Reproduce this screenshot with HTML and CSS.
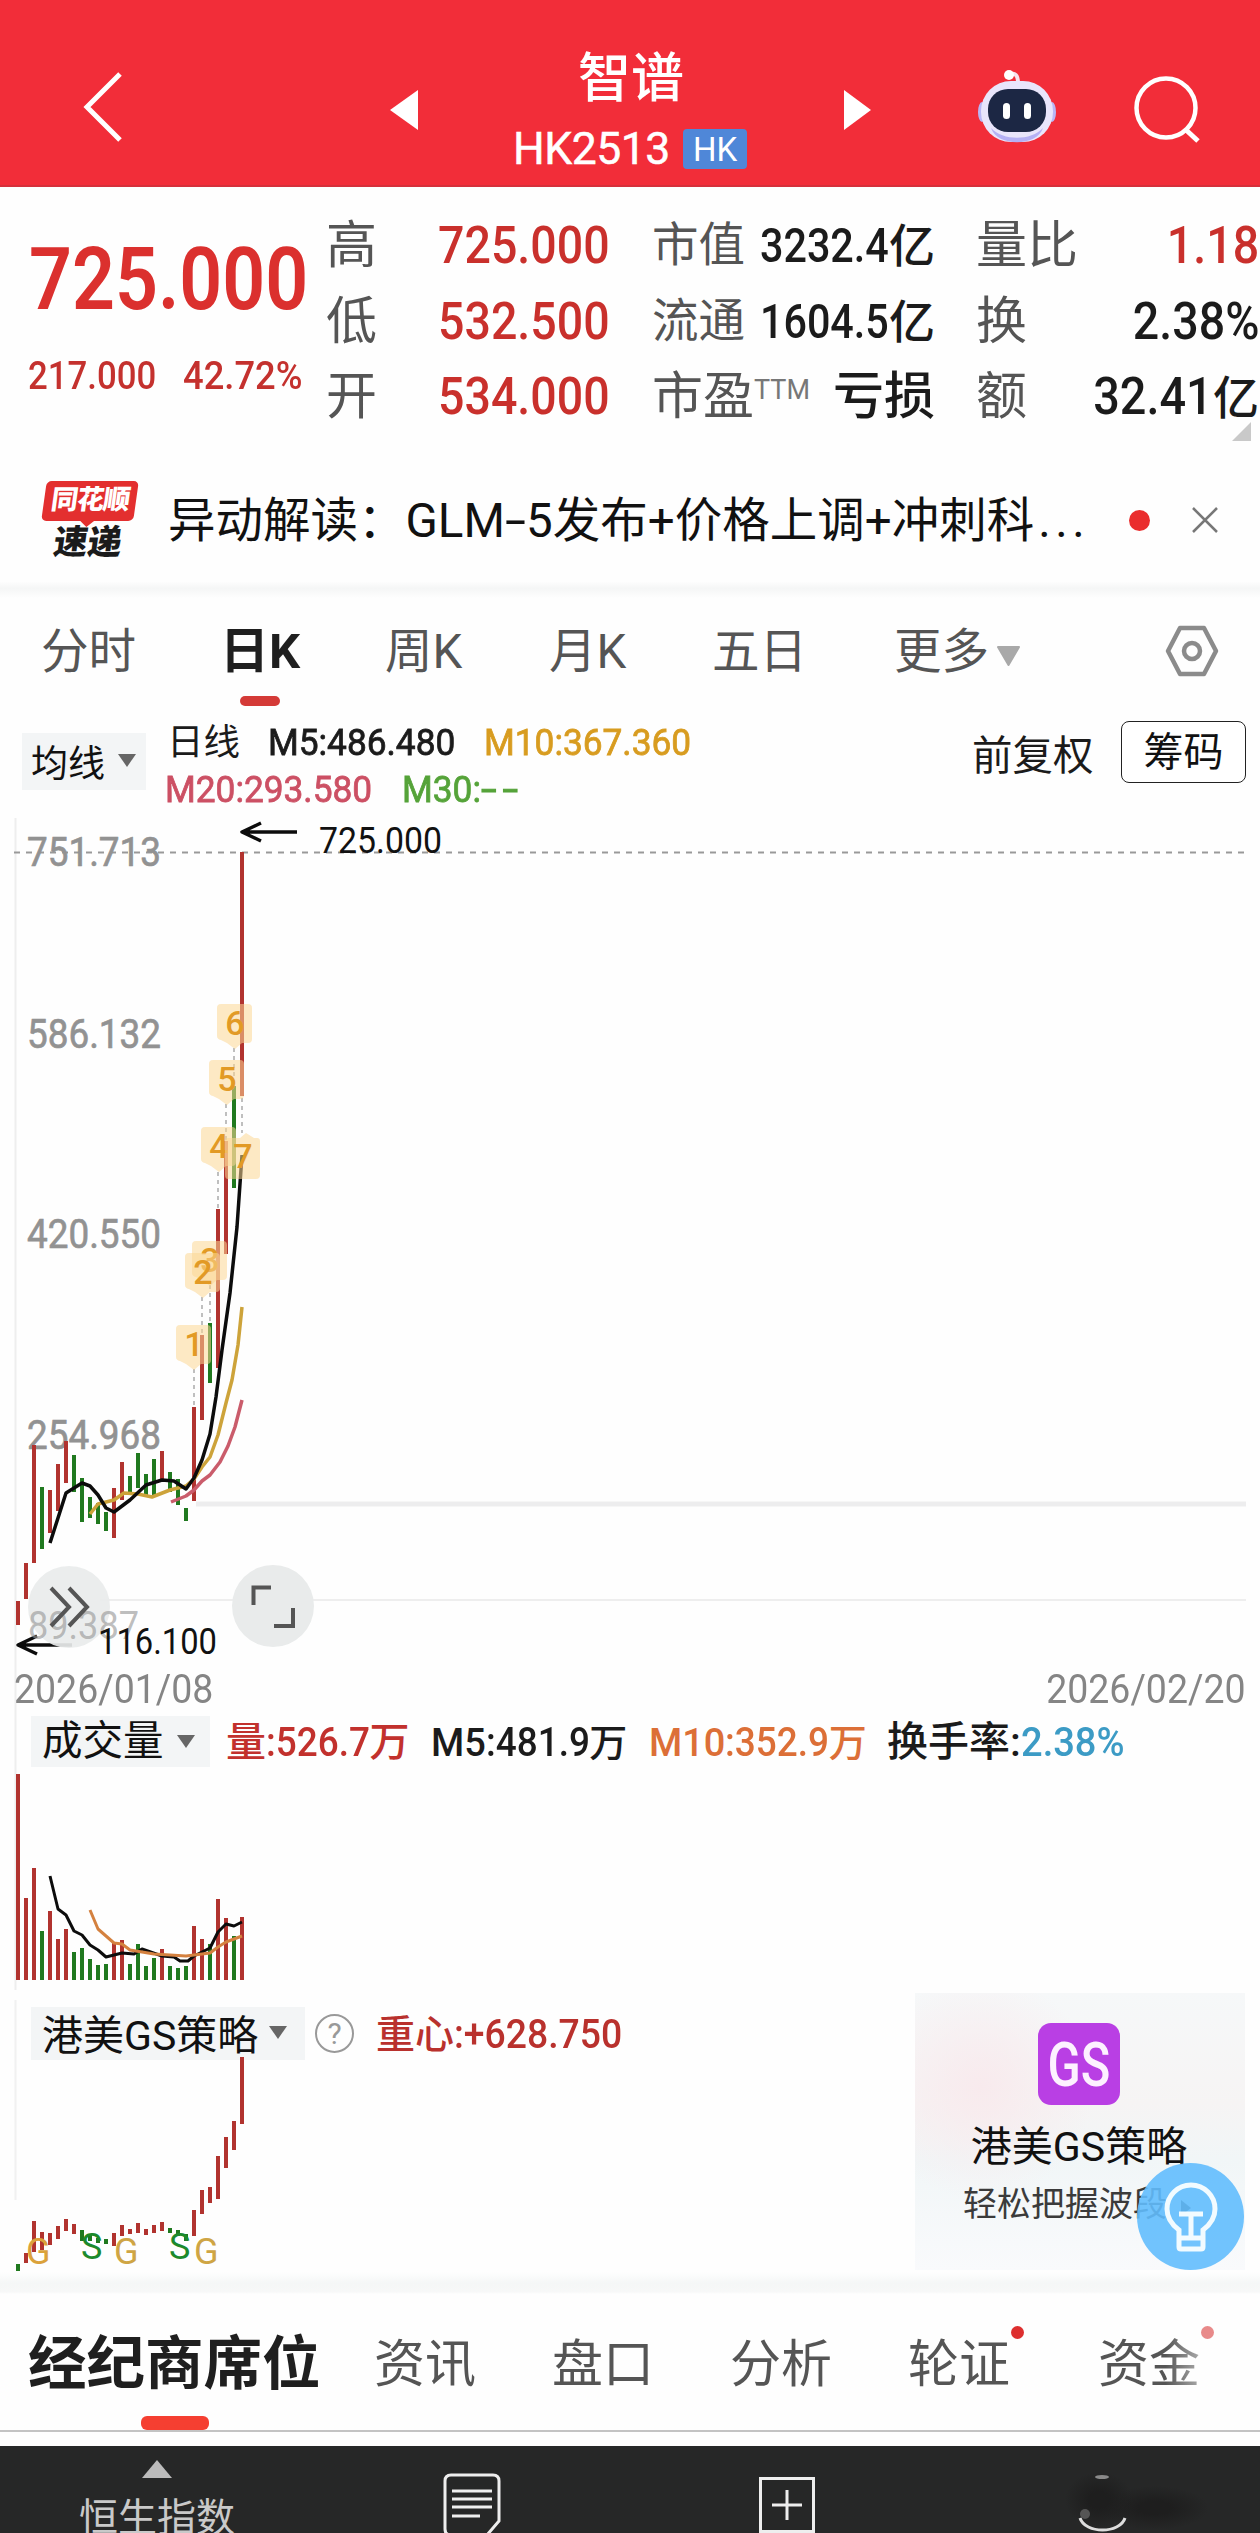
FILE: index.html
```html
<!DOCTYPE html>
<html lang="zh-CN">
<head>
    <meta charset="UTF-8">
    <meta name="viewport" content="width=device-width, initial-scale=1.0">
    <title>智谱 HK2513</title>
    <link rel="stylesheet" href="styles.css">
</head>
<body>
    <header class="topbar">
        <svg class="back" width="48" height="76" viewBox="0 0 48 76"><path d="M40 5L7 38L40 71" fill="none" stroke="#fff" stroke-width="5"/></svg>
        <svg class="prev" width="28" height="40" viewBox="0 0 28 40"><path d="M28 0V40L0 20Z" fill="#fff"/></svg>
        <div class="title">
            <h1>智谱</h1>
            <p><span class="code">HK2513</span><span class="market">HK</span></p>
        </div>
        <svg class="next" width="28" height="40" viewBox="0 0 28 40"><path d="M0 0V40L27 20Z" fill="#fff"/></svg>
        <svg class="robot" width="80" height="76" viewBox="0 0 80 76">
            <path d="M41 14C41 6 38 3 32 6" fill="none" stroke="#f7e3ee" stroke-width="4"/>
            <circle cx="32" cy="6" r="5" fill="#fff"/>
            <ellipse cx="5" cy="43" rx="4" ry="10" fill="#b9b6f5"/>
            <ellipse cx="75" cy="43" rx="4" ry="10" fill="#b9b6f5"/>
            <rect x="4" y="12" width="72" height="61" rx="30" fill="#e9e5fb"/>
            <path d="M14 59C26 72 54 72 66 59C60 78 20 78 14 59Z" fill="#b5b0f4"/>
            <rect x="11" y="20" width="58" height="43" rx="20" fill="#1c2744"/>
            <rect x="26" y="34" width="7" height="16" rx="3.5" fill="#fff"/>
            <rect x="47" y="34" width="7" height="16" rx="3.5" fill="#fff"/>
        </svg>
        <svg class="search" width="70" height="70" viewBox="0 0 70 70"><circle cx="33" cy="33" r="29.500" fill="none" stroke="#fff" stroke-width="4.500"/><path d="M52 54L65 66" stroke="#fff" stroke-width="5"/></svg>
    </header>

    <section class="quote">
        <div class="price">
            <div class="last"><span>725.000</span></div>
            <div class="change"><span>217.000</span><span>42.72%</span></div>
        </div>
        <div class="stats">
            <label>高</label><b class="up">725.000</b>
            <label class="mid">市值</label><b class="cap"><span>3232.4</span>亿</b>
            <label>量比</label><b class="up">1.18</b>

            <label>低</label><b class="up">532.500</b>
            <label class="mid">流通</label><b class="cap"><span>1604.5</span>亿</b>
            <label>换</label><b>2.38%</b>

            <label>开</label><b class="up">534.000</b>
            <label>市盈<sup>TTM</sup></label><b class="loss">亏损</b>
            <label>额</label><b class="turnover"><span>32.41</span>亿</b>
        </div>
        <i class="corner"></i>
    </section>

    <section class="news">
        <div class="news-logo">
            <div class="logo-top">同花顺</div>
            <div class="logo-bottom">速递</div>
        </div>
        <p>异动解读：GLM<span class="hyphen">-</span>5发布+价格上调+冲刺科<span class="dots">...</span></p>
        <i class="dot"></i>
        <svg width="28" height="28" viewBox="0 0 28 28"><path d="M2 2L26 26M26 2L2 26" stroke="#777" stroke-width="2.500"/></svg>
    </section>
    <div class="band"></div>

    <nav class="periods">
        <a>分时</a><a class="active">日K</a><a>周K</a><a>月K</a><a>五日</a>
        <a>更多<svg width="25" height="22" viewBox="0 0 25 22"><path d="M2 2H23L12.500 20Z" fill="#a9a9a9" stroke="#a9a9a9" stroke-width="2" stroke-linejoin="round"/></svg></a>
        <svg class="gear" width="54" height="52" viewBox="0 0 54 52"><path d="M15 3H39L51 26L39 49H15L3 26Z" fill="none" stroke="#8b8b8b" stroke-width="4.500" stroke-linejoin="round"/><circle cx="27" cy="26" r="8" fill="none" stroke="#8b8b8b" stroke-width="4.500"/></svg>
    </nav>

    <section class="ma">
        <div class="picker">均线<i class="tri"></i></div>
        <div class="ma-values">
            <div><span class="w-day">日线</span><span class="w-m5 n">M5:486.480</span><span class="n gold">M10:367.360</span></div>
            <div><span class="w-m20 n pink">M20:293.580</span><span class="n green">M30:<span class="dashes">--</span></span></div>
        </div>
        <span class="adjust">前复权</span>
        <button class="chips">筹码</button>
    </section>

    <svg class="kchart" width="1260" height="850" viewBox="0 815 1260 850">
        <path d="M15.500 818V1990" stroke="#eee" stroke-width="2"/>
        <path d="M14 852.500H1246" stroke="#999" stroke-width="2" stroke-dasharray="6 6"/>
        <path d="M196 1504H1246" stroke="#ededee" stroke-width="5"/>
        <path d="M100 1600H1246" stroke="#eee" stroke-width="2"/>
        <g class="axis">
            <text x="27" y="866" textLength="134" lengthAdjust="spacingAndGlyphs">751.713</text>
            <text x="27" y="1048" textLength="134" lengthAdjust="spacingAndGlyphs">586.132</text>
            <text x="27" y="1248" textLength="134" lengthAdjust="spacingAndGlyphs">420.550</text>
            <text x="27" y="1449" textLength="134" lengthAdjust="spacingAndGlyphs">254.968</text>
        </g>
        <g id="leads" stroke="#aaa" stroke-width="1.500" stroke-dasharray="4 4"></g>
        <g id="candles"></g>
        <polyline class="line-pink" points="171,1502 186,1496 194,1490 202,1481 210,1475 220,1462 228,1446 235,1427 242,1400"/>
        <polyline class="line-gold" points="90,1514 98,1504 114,1500 124,1493 138,1494 152,1497 170,1490 186,1486 194,1479 202,1467 210,1457 218,1435 226,1403 232,1380 238,1345 242,1307"/>
        <polyline class="line-black" points="50,1543 66,1493 82,1483 90,1486 98,1495 106,1508 114,1512 130,1500 146,1485 162,1480 174,1481 186,1489 194,1478 202,1460 210,1434 216,1397 222,1350 230,1293 237,1227 242,1155"/>
        <g id="marks" class="marks"></g>
        <path d="M297 832H244M261 823L242 832L261 841" class="arrow"/>
        <text class="tip" x="319" y="853" textLength="123" lengthAdjust="spacingAndGlyphs">725.000</text>
        <path d="M72 1645H20M37 1636L18 1645L37 1654" class="arrow"/>
        <circle cx="69" cy="1607" r="41" fill="#e9ebeb" opacity=".92"/>
        <circle cx="273" cy="1606" r="41" fill="#e9ebeb"/>
        <text class="low" x="28" y="1639" textLength="111" lengthAdjust="spacingAndGlyphs">89.387</text>
        <text class="tip" x="98" y="1654" textLength="119" lengthAdjust="spacingAndGlyphs">116.100</text>
        <path d="M51 1588L69 1607L51 1626M69 1588L87 1607L69 1626" fill="none" stroke="#555" stroke-width="4"/>
        <path d="M253.500 1605V1587.500H271M293 1608V1626H274" fill="none" stroke="#555" stroke-width="4"/>
    </svg>
    <div class="dates"><span>2026/01/08</span><span>2026/02/20</span></div>

    <section class="volume">
        <div class="picker">成交量<i class="tri"></i></div>
        <span class="v1 red">量<span>:526.7</span>万</span>
        <span class="v2">M5<span>:481.9</span>万</span>
        <span class="v3 orange">M10<span>:352.9</span>万</span>
        <span class="v4">换手率:</span><span class="v5 n blue">2.38%</span>
    </section>
    <svg class="vchart" width="1260" height="220" viewBox="0 1770 1260 220">
        <g id="volumes"></g>
        <polyline class="line-black thin" points="50,1876 58,1909 66,1915 74,1931 82,1935 90,1945 98,1950 106,1957 122,1953 134,1954 142,1949 162,1956 174,1957 180,1961 188,1961 194,1956 210,1948 218,1932 226,1924 234,1926 242,1922"/>
        <polyline class="line-orange" points="90,1910 98,1929 106,1936 114,1943 122,1944 130,1950 154,1954 186,1956 210,1953 218,1947 226,1942 234,1939 242,1936"/>
    </svg>

    <section class="gs">
        <div class="gs-main">
            <div class="gs-head">
                <div class="picker">港美GS策略<i class="tri"></i></div>
                <span class="help">?</span>
                <span class="gravity">重心<span>:+628.750</span></span>
            </div>
            <svg class="gchart" width="900" height="210" viewBox="0 2062 900 210">
                <path d="M15.500 2000V2200" stroke="#f1f1f1" stroke-width="2"/>
                <g id="gsbars"></g>
                <g class="signals">
                    <text x="26" y="2264" fill="#dba23c">G</text>
                    <text x="81" y="2259" fill="#1c8a2c">S</text>
                    <text x="114" y="2264" fill="#cfa544">G</text>
                    <text x="169" y="2259" fill="#1c8a2c">S</text>
                    <text x="194" y="2264" fill="#cfa544">G</text>
                </g>
            </svg>
        </div>
        <aside class="gs-card">
            <div class="gs-icon"><span>GS</span></div>
            <h3>港美GS策略</h3>
            <p>轻松把握波段<i></i></p>
            <div class="bulb">
                <svg width="56" height="72" viewBox="0 0 56 72"><path d="M16 66V49C8 43 4 36 4 28A23 23 0 0 1 52 28C52 36 48 43 40 49V66Q40 68 38 68H18Q16 68 16 66ZM16 57H40M16 33H40M28 33V57" fill="none" stroke="#f2fbff" stroke-width="5"/></svg>
            </div>
        </aside>
    </section>
    <div class="band tall"></div>

    <nav class="sections">
        <a class="active">经纪商席位</a><a>资讯</a><a>盘口</a><a>分析</a><a class="new">轮证</a><a class="new fade">资金</a>
    </nav>

    <footer class="bottombar">
        <div class="index"><i></i>恒生指数</div>
        <svg width="58" height="64" viewBox="0 0 58 64"><path d="M8 2H50Q56 2 56 8V48L44 62H8Q2 62 2 56V8Q2 2 8 2Z" fill="none" stroke="#eee" stroke-width="3"/><path d="M9 18H49M9 26H49M9 34H49M9 43H37" stroke="#eee" stroke-width="3"/></svg>
        <svg class="plus" width="56" height="56" viewBox="0 0 56 56"><rect x="1.500" y="1.500" width="53" height="53" fill="none" stroke="#eee" stroke-width="3"/><path d="M28 13V43M13 28H43" stroke="#eee" stroke-width="3"/></svg>
        <svg class="ghost" width="180" height="64" viewBox="0 0 180 64">
            <defs><radialGradient id="shade"><stop offset=".3" stop-color="#1e1e1e"/><stop offset="1" stop-color="#1e1e1e" stop-opacity="0"/></radialGradient></defs>
            <ellipse cx="128" cy="36" rx="54" ry="22" fill="url(#shade)"/>
            <ellipse cx="72" cy="28" rx="34" ry="28" fill="url(#shade)"/>
            <ellipse cx="75" cy="5" rx="7" ry="2" fill="#8a8a8a"/>
            <path d="M53 46C58 62 93 62 98 46" fill="none" stroke="#ddd" stroke-width="3"/>
            <ellipse cx="58" cy="42" rx="5" ry="5" fill="#555"/>
        </svg>
    </footer>
    <script src="chart.js"></script>
</body>
</html>
```
FILE: styles.css
```css
* {
    box-sizing: border-box;
}

body {
    margin: 0;
    width: 1260px;
    height: 2533px;
    overflow: hidden;
    background: #fefefe;
    color: #1b1b1b;
    font-family: Roboto, "Noto Sans CJK SC", sans-serif;
}

h1, h3, p {
    margin: 0;
    font-weight: 400;
}

i {
    font-style: normal;
}

/* header */
.topbar {
    display: flex;
    height: 187px;
    background: #f22d39;
    border-bottom: 2px solid #d5303b;
    color: #fff;
}

.back { margin: 69px 0 0 80px; }
.prev { margin: 90px 0 0 262px; }

.title {
    width: 426px;
    padding-top: 43px;
    text-align: center;
}

.title h1 {
    font-size: 53px;
    line-height: 72px;
    font-weight: 500;
}

.title p {
    display: flex;
    align-items: center;
    margin-left: 95px;
    height: 68px;
}

.code {
    width: 170px;
    font-size: 44.5px;
    letter-spacing: -0.5px;
    text-align: left;
    -webkit-text-stroke: .5px;
}

.market {
    width: 64px;
    height: 40px;
    line-height: 41px;
    border-radius: 4px;
    background: #4f87d8;
    font-size: 33px;
}

.next { margin-top: 90px; }
.robot { margin: 69px 0 0 105px; }
.search { margin: 75px 0 0 76px; }

/* quote */
.quote {
    position: relative;
    display: flex;
    height: 271px;
    padding-top: 21px;
}

.price {
    width: 326px;
    color: #db302e;
}

.last {
    height: 118px;
    padding: 21px 0 0 29px;
    font-size: 87px;
    line-height: 100px;
    font-weight: 600;
}

.last span,
.change span {
    display: inline-block;
    transform: scaleX(.865);
    transform-origin: left;
}

.change {
    display: flex;
    padding-left: 28px;
    font-size: 39.5px;
    line-height: 100px;
    font-weight: 500;
    color: #c4312e;
}

.change span:first-child {
    width: 155px;
    transform: scaleX(.88);
}

.change span + span {
    transform: scaleX(.92);
}

.stats {
    display: grid;
    grid-template-columns: 112px 214px 154px 129px 153px 171px;
    grid-template-rows: repeat(3, 75.5px);
    width: 933px;
    line-height: 75px;
}

.stats label {
    font-size: 51px;
    color: #555;
    white-space: nowrap;
}

.stats label:nth-child(6n + 5) {
    padding-left: 41px;
}

.stats label.mid {
    font-size: 46.5px;
}

.stats sup {
    position: relative;
    top: -15px;
    font-size: 27px;
    line-height: 0;
    vertical-align: baseline;
    color: #777;
}

.stats b {
    justify-self: start;
    font-size: 52px;
    font-weight: 500;
    white-space: nowrap;
    transform: scaleX(.895);
    transform-origin: left;
}

.stats b:nth-child(6n) {
    justify-self: end;
    transform-origin: right;
}

.stats .up {
    color: #c9302c;
}

.stats b.cap,
.stats b.turnover,
.stats b.loss {
    justify-self: end;
    transform: none;
    font-size: 46px;
}

.stats b.loss {
    font-size: 51px;
}

.stats b span {
    display: inline-block;
    font-size: 48px;
    transform: scaleX(.86);
    transform-origin: right;
}

.stats b.turnover span {
    font-size: 52px;
    transform: scaleX(.9);
}

.corner {
    position: absolute;
    right: 9px;
    bottom: 17px;
    border-left: 19px solid transparent;
    border-bottom: 19px solid #c9c9c9;
}

/* news */
.news {
    display: flex;
    align-items: center;
    height: 124px;
    padding-left: 42px;
}

.news-logo {
    width: 126px;
}

.logo-top {
    position: relative;
    width: 92px;
    height: 40px;
    line-height: 38px;
    margin-left: 2px;
    border-radius: 5px;
    background: #e32f2f;
    color: #fff;
    font-size: 27px;
    font-weight: 900;
    letter-spacing: -1px;
    text-align: center;
    transform: skewX(-8deg);
}

.logo-top::after {
    content: "";
    position: absolute;
    left: 38px;
    top: 39px;
    border: 8px solid transparent;
    border-top: 7px solid #e32f2f;
    border-bottom: 0;
}

.logo-bottom {
    margin: 4px 0 0 12px;
    font-size: 34px;
    line-height: 34px;
    font-weight: 900;
    transform: skewX(-8deg);
}

.news p {
    width: 961px;
    padding-bottom: 7px;
    font-size: 47.5px;
    white-space: nowrap;
    color: #111;
}

.hyphen {
    display: inline-block;
    margin: 0 4px;
    transform: scaleX(1.6);
}

.dots {
    letter-spacing: 4.5px;
    margin-left: 4px;
}

.dot {
    width: 21px;
    height: 21px;
    margin-right: 41px;
    border-radius: 50%;
    background: #ea2d2d;
}

.band {
    height: 16px;
    background: linear-gradient(#fdfdfd, #f5f6f6 40%, #fefefe);
}

.band.tall {
    height: 22px;
    background: linear-gradient(#fefefe, #f5f7f7 50%, #f7f8f8 90%, #fefefe);
}

/* period tabs */
.periods {
    display: flex;
    height: 112px;
    padding-left: 41px;
    line-height: 108px;
    font-size: 47.5px;
    color: #555;
}

.periods a { width: 164px; white-space: nowrap; }
.periods a:nth-child(1) { width: 179px; }
.periods a:nth-child(3) { padding-left: 1px; }
.periods a:nth-child(4) { padding-left: 1px; }
.periods a:nth-child(5) { width: 182px; }
.periods a:nth-child(6) { width: 271px; }
.periods a svg { margin: 0 0 1px 7px; }

.periods .active {
    position: relative;
    color: #1f1f1f;
    font-size: 49px;
    font-weight: 700;
}

.periods .active::after {
    content: "";
    position: absolute;
    left: 20px;
    top: 98px;
    width: 40px;
    height: 10px;
    border-radius: 5px;
    background: #d43a37;
}

.gear {
    margin: 27px 0 0 0;
}

/* moving averages */
.ma {
    display: flex;
    height: 105px;
    padding-left: 22px;
}

.picker {
    display: flex;
    align-items: center;
    background: #f3f5f6;
    color: #111;
    font-size: 40px;
    white-space: nowrap;
}

.tri {
    margin-left: 13px;
    border: 9.5px solid transparent;
    border-top: 13px solid #666;
    border-bottom: 0;
}

.ma .picker {
    width: 124px;
    height: 57px;
    margin-top: 23px;
    padding: 0 0 2px 9px;
    font-size: 37px;
}

.ma-values {
    width: 826px;
    padding: 9px 0 0 21px;
    font-size: 36.5px;
    line-height: 47px;
}

.ma-values div {
    display: flex;
}

.n {
    transform: scaleX(.94);
    transform-origin: left;
    font-weight: 500;
    font-size: 37.5px;
}

.ma-values .n { font-weight: 400; -webkit-text-stroke: .8px; }
.w-day { width: 101px; }
.w-m5 { width: 216px; }
.w-m20 { width: 237px; margin-left: -2px; }
.gold { color: #d89c20; }
.pink { color: #cc5064; }
.green { color: #55a339; }
.red { color: #c2312d; }
.orange { color: #dc6f37; }
.blue { color: #3c9bc5; }
.dashes { display: inline-block; transform: scaleX(1.6); transform-origin: left; letter-spacing: 4px; }

.adjust {
    width: 149px;
    padding-top: 15px;
    font-size: 40.5px;
    line-height: 62px;
}

.chips {
    width: 125px;
    height: 62px;
    margin-top: 11px;
    padding: 0;
    border: 1.5px solid #222;
    border-radius: 8px;
    background: #fff;
    color: #111;
    font: 40px/59px Roboto, "Noto Sans CJK SC", sans-serif;
}

/* charts */
svg {
    flex-shrink: 0;
}

.kchart, .vchart, .gchart {
    display: block;
    overflow: visible;
}

.axis { font-size: 41px; fill: #929292; stroke: #929292; stroke-width: .7px; }
.low { font-size: 38px; fill: #999; fill-opacity: .65; }
.tip { font-size: 36px; fill: #111; }
.marks { font-size: 34px; font-weight: 500; fill: #e29a25; text-anchor: middle; }
.marks path { fill: #fbd794; fill-opacity: .55; }
.up-bar { fill: #b1332f; }
.down-bar { fill: #20791f; }

polyline, .arrow {
    fill: none;
    stroke-width: 3.5;
    stroke-linejoin: round;
    stroke: #0c0c0c;
}

polyline.thin { stroke-width: 3; }
polyline.line-gold { stroke: #cda33a; stroke-width: 3.5; }
polyline.line-pink { stroke: #ca5c6b; stroke-width: 3.5; }
polyline.line-orange { stroke: #d4813f; stroke-width: 3; }

.dates {
    display: flex;
    justify-content: space-between;
    height: 47px;
    padding: 0 14px;
    line-height: 48px;
    font-size: 40.5px;
    color: #858585;
}

.dates span {
    transform: scaleX(.925);
    transform-origin: left;
}

.dates span + span {
    transform-origin: right;
}

.volume {
    position: relative;
    display: flex;
    height: 58px;
    line-height: 61px;
    font-size: 38px;
    white-space: nowrap;
}

.volume .picker {
    width: 179px;
    height: 51px;
    margin: 4px 16px 0 31px;
    padding-left: 11px;
    font-size: 40.5px;
}

.volume > span > span {
    display: inline-block;
    font-size: 41px;
    transform: scaleX(.9);
    transform-origin: left;
    margin-right: -12px;
}

.volume > span:not(.n) { font-weight: 500; }
.volume .v1 { width: 205px; font-size: 40px; }
.volume .v2 { width: 218px; font-weight: 400; }
.volume .v3 { width: 238px; font-weight: 400; }
.volume .v4 { width: 134px; font-size: 41px; font-weight: 400; }
.volume .v5 { font-size: 40.5px; }

/* GS strategy */
.gs {
    display: flex;
    height: 282px;
}

.gs-main {
    width: 915px;
}

.gs-head {
    display: flex;
    height: 72px;
    padding: 17px 0 0 31px;
}

.gs-head .picker {
    width: 274px;
    height: 53px;
    padding: 0 0 3px 11px;
    font-size: 41px;
}

.gs-head .tri {
    margin-left: 11px;
}

.help {
    width: 39px;
    height: 39px;
    margin: 7px 22px 0 10px;
    border: 2px solid #999;
    border-radius: 50%;
    color: #999;
    font-size: 30px;
    line-height: 36px;
    text-align: center;
}

.gravity {
    font-size: 39px;
    line-height: 54px;
    font-weight: 500;
    color: #b9312d;
    white-space: nowrap;
}

.gravity span {
    display: inline-block;
    font-size: 41px;
    transform: scaleX(.91);
    transform-origin: left;
}

.signals { font-size: 36px; }

.gs-card {
    position: relative;
    width: 330px;
    height: 277px;
    margin-top: 3px;
    padding-top: 30px;
    background: radial-gradient(circle at 20% 34%, #f8eaed, rgba(248, 238, 240, 0) 35%), linear-gradient(#f6f8f9, #f6f4f4 40%, #f1f6f7 60%, #f9fafc);
    text-align: center;
}

.gs-icon {
    width: 82px;
    height: 82px;
    margin: 0 auto 0 123px;
    border-radius: 13px;
    background: #b93fe4;
    color: #fdf1ff;
    font-size: 61px;
    line-height: 84px;
    font-weight: 500;
}

.gs-icon span {
    display: block;
    transform: scaleX(.8);
    margin: 0 -10px;
}

.gs-card h3 {
    margin: 12px 2px 0 0;
    font-size: 41px;
    line-height: 60px;
    color: #111;
}

.gs-card p {
    padding-left: 48px;
    text-align: left;
    font-size: 34px;
    line-height: 54px;
    color: #3b3b3b;
    white-space: nowrap;
}

.gs-card p i {
    display: inline-block;
    margin-left: 14px;
    border: 8px solid transparent;
    border-left: 10px solid #3b3b3b;
    border-right: 0;
}

.bulb {
    position: absolute;
    left: 222px;
    top: 170px;
    width: 107px;
    height: 107px;
    border-radius: 50%;
    background: rgba(98, 189, 253, .9);
}

.bulb svg {
    margin: 18px 0 0 0;
}

/* section tabs */
.sections {
    display: flex;
    height: 138px;
    padding-left: 28px;
    border-bottom: 2px solid #c3c3c3;
    font-size: 51px;
    line-height: 141px;
    color: #555;
    white-space: nowrap;
}

.sections a {
    position: relative;
    flex-shrink: 0;
    width: 178px;
}

.sections a.active {
    width: 346px;
    font-size: 58.5px;
    font-weight: 700;
    color: #1f1f1f;
}

.sections a:nth-child(5) { width: 190px; }
.sections a:nth-child(6) { width: 150px; }

.sections .active::after {
    content: "";
    position: absolute;
    left: 113px;
    top: 122px;
    width: 68px;
    height: 14px;
    border-radius: 6px;
    background: #f53f31;
}

.sections .new::after {
    content: "";
    position: absolute;
    left: 103px;
    top: 32px;
    width: 13px;
    height: 13px;
    border-radius: 50%;
    background: #dd2f2f;
}

.sections .fade::after { background: #e88a8a; }

.sections .fade {
    background: linear-gradient(90deg, #555 45%, #aaa 68%);
    -webkit-background-clip: text;
    color: transparent;
}

/* bottom bar */
.bottombar {
    display: flex;
    height: 87px;
    margin-top: 14px;
    background: #262727;
    color: #c9c9c9;
}

.index {
    width: 156px;
    height: 87px;
    margin: 0 208px 0 79px;
    padding-top: 14px;
    overflow: hidden;
    font-size: 39px;
    line-height: 56px;
    white-space: nowrap;
}

.index i {
    display: block;
    width: 0;
    margin: 0 0 12px 63px;
    border: 15px solid transparent;
    border-bottom: 18px solid #bbb;
    border-top: 0;
}

.bottombar svg { margin-top: 27px; }
.bottombar .plus { margin: 31px 0 0 258px; }
.bottombar .ghost { margin: 26px 0 0 212px; }
```
FILE: chart.js
```js
// one bar every 8px, [top, bottom, up?]
var kline = [
    [1601, 1625, 1], [1563, 1599, 1], [1445, 1563, 1], [1487, 1549, 0], [1490, 1533, 1],
    [1464, 1511, 1], [1441, 1483, 1], [1455, 1492, 0], [1478, 1522, 0], [1497, 1518, 0],
    [1503, 1524, 0], [1512, 1531, 0], [1488, 1538, 1], [1462, 1500, 1], [1476, 1494, 0],
    [1453, 1488, 0], [1474, 1496, 0], [1459, 1495, 0], [1451, 1480, 1], [1472, 1492, 0],
    [1479, 1505, 0], [1508, 1521, 0], [1407, 1501, 1], [1335, 1420, 1], [1323, 1383, 0],
    [1209, 1368, 1], [1141, 1254, 1], [1086, 1188, 0], [852, 1096, 1]
];

var volumeTops = [1774, 1898, 1868, 1931, 1911, 1939, 1929, 1952, 1948, 1959, 1965, 1964, 1943, 1940,
    1964, 1944, 1966, 1958, 1949, 1966, 1968, 1966, 1926, 1939, 1944, 1899, 1918, 1936, 1917];

var gs = [
    [2264, 2271, 0], [2253, 2263, 1], [2221, 2252, 1], [2232, 2250, 1], [2233, 2245, 1],
    [2226, 2239, 1], [2219, 2231, 1], [2224, 2234, 1], [2230, 2241, 0], [2234, 2241, 0],
    [2238, 2243, 0], [2239, 2244, 0], [2233, 2246, 1], [2225, 2236, 1], [2229, 2234, 1],
    [2223, 2233, 1], [2229, 2235, 1], [2225, 2233, 1], [2222, 2231, 1], [2228, 2233, 0],
    [2230, 2236, 0], [2234, 2241, 0], [2210, 2236, 1], [2190, 2214, 1], [2187, 2203, 1],
    [2156, 2199, 1], [2137, 2168, 1], [2121, 2150, 1], [2057, 2124, 1]
];

function drawBars(id, rows) {
    document.getElementById(id).innerHTML = rows.map(function (r, i) {
        return '<rect x="' + (16 + 8 * i) + '" y="' + r[0] + '" width="4" height="' + (r[1] - r[0]) +
            '" class="' + (r[2] ? 'up-bar' : 'down-bar') + '"/>';
    }).join('');
}

drawBars('candles', kline);
drawBars('gsbars', gs);
drawBars('volumes', volumeTops.map(function (top, i) {
    return [top, 1980, kline[i][2]];
}));

// nine-turn labels: text, left, top, pointing up?
var marks = [[1, 176, 1325], [3, 192, 1241], [2, 185, 1253], [4, 201, 1127], [5, 209, 1060], [6, 217, 1004], [7, 225, 1133, 1]];
document.getElementById('marks').innerHTML = marks.map(function (m) {
    var d = m[3] ? 'm3 5h12l6-5l8 5h3q3 0 3 3v34q0 4-4 4h-28q-3 0-3-4v-34q0-3 3-3z'
                 : 'm4 0h27q4 0 4 4v31q0 4-4 4h-6l-7 6l-8-6l-6-3q-4-1-4-4v-28q0-4 4-4z';
    return '<path d="M' + m[1] + ' ' + m[2] + d + '"/><text x="' + (m[1] + 18) + '" y="' + (m[2] + (m[3] ? 35 : 31)) + '">' + m[0] + '</text>';
}).join('');

var leads = [[194, 1369, 1407], [202, 1297, 1335], [210, 1285, 1323], [218, 1172, 1209], [226, 1104, 1141], [234, 1048, 1086], [242, 1098, 1133]];
document.getElementById('leads').innerHTML = leads.map(function (l) {
    return '<path d="M' + l[0] + ' ' + l[1] + 'V' + l[2] + '"/>';
}).join('');
```
